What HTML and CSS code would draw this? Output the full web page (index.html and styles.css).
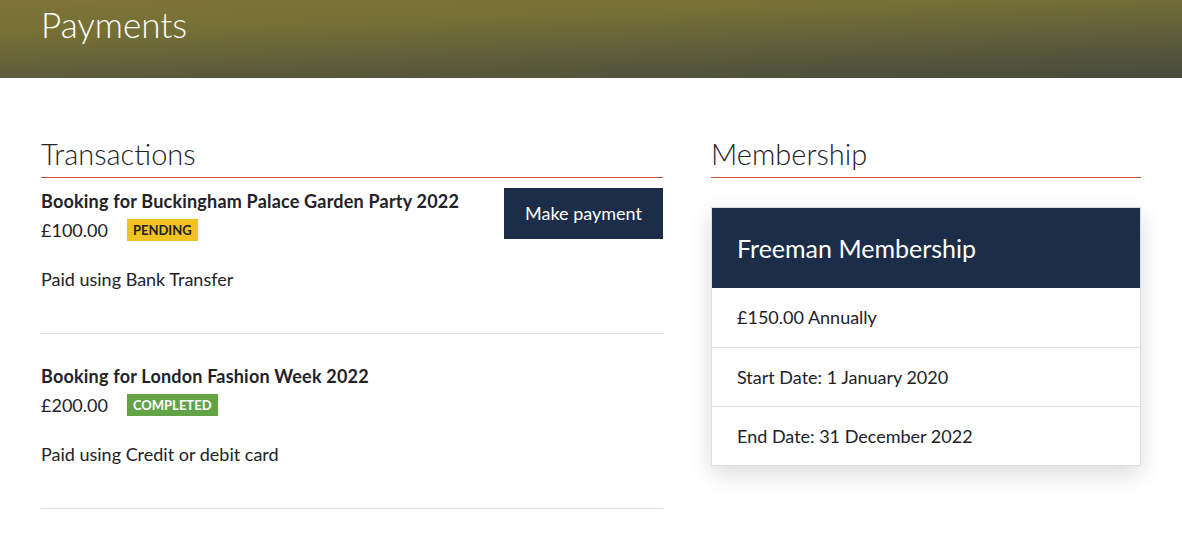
FILE: index.html
```html
<!DOCTYPE html>
<html lang="en">
<head>
<meta charset="utf-8">
<title>Payments</title>
<link rel="stylesheet" href="styles.css">
</head>
<body>
<header class="page-header">
  <div class="container">
    <h1 class="page-title">Payments</h1>
  </div>
</header>
<main class="container main">
  <section class="col-left">
    <h2 class="section-title">Transactions</h2>
    <div class="txn">
      <div class="txn-info">
        <div class="txn-title">Booking for Buckingham Palace Garden Party 2022</div>
        <div class="txn-price">£100.00 <span class="badge badge-pending">PENDING</span></div>
        <div class="txn-method">Paid using Bank Transfer</div>
      </div>
      <a class="btn" href="#">Make payment</a>
    </div>
    <div class="txn">
      <div class="txn-info">
        <div class="txn-title">Booking for London Fashion Week 2022</div>
        <div class="txn-price">£200.00 <span class="badge badge-completed">COMPLETED</span></div>
        <div class="txn-method">Paid using Credit or debit card</div>
      </div>
    </div>
  </section>
  <section class="col-right">
    <h2 class="section-title">Membership</h2>
    <div class="card">
      <div class="card-head">Freeman Membership</div>
      <div class="card-row">£150.00 Annually</div>
      <div class="card-row">Start Date: 1 January 2020</div>
      <div class="card-row">End Date: 31 December 2022</div>
    </div>
  </section>
</main>
</body>
</html>
```
FILE: styles.css
```css
* { box-sizing: border-box; }
html, body { margin: 0; padding: 0; }
body {
  font-family: Lato, "Open Sans", sans-serif;
  color: #222228;
  background: #fff;
}
.container {
  width: 1100px;
  margin: 0 auto;
}
.page-header {
  height: 78px;
  background: linear-gradient(178deg, #7e7535 0%, #757037 30%, #5b5a3b 68%, #474a3e 100%);
}
.page-title {
  margin: 0;
  padding-top: 4px;
  font-size: 35px;
  line-height: 40px;
  font-weight: 300;
  color: #fff;
}
.main {
  display: grid;
  grid-template-columns: 622px 430px;
  column-gap: 48px;
  padding-top: 59px;
}
.section-title {
  margin: 0;
  font-size: 29px;
  line-height: 34px;
  font-weight: 300;
  padding-bottom: 6px;
  border-bottom: 1px solid #c4512f;
}
.txn {
  display: flex;
  justify-content: space-between;
  align-items: flex-start;
  padding: 29px 0 41px;
  border-bottom: 1px solid #e3e3ea;
}
.txn:first-of-type { padding-top: 10px; }
.txn-title {
  font-size: 18px;
  line-height: 26px;
  font-weight: 700;
  letter-spacing: 0.2px;
}
.txn-price {
  margin-top: 2px;
  font-size: 18px;
  line-height: 28px;
  display: flex;
  align-items: center;
  gap: 19px;
}
.txn-method {
  margin-top: 22px;
  font-size: 18px;
  line-height: 26px;
}
.badge {
  display: inline-block;
  font-size: 13px;
  line-height: 22px;
  font-weight: 700;
  padding: 0 6px;
}
.badge-pending { background: #f0c222; color: #222; }
.badge-completed { background: #63a346; color: #fff; }
.btn {
  display: inline-block;
  height: 51px;
  line-height: 51px;
  padding: 0 21px;
  background: #1b2d48;
  color: #fff;
  font-size: 18px;
  text-decoration: none;
}
.card {
  margin-top: 29px;
  border: 1px solid #dedede;
  box-shadow: 0 8px 22px rgba(0, 0, 0, 0.14);
}
.card-head {
  background: #1b2d48;
  color: #fff;
  height: 80px;
  line-height: 80px;
  padding-left: 25px;
  font-size: 25px;
}
.card-row {
  height: 59px;
  line-height: 58px;
  padding-left: 25px;
  font-size: 18px;
  border-top: 1px solid #e0e0e0;
}
.card-head + .card-row { border-top: 0; }
```
